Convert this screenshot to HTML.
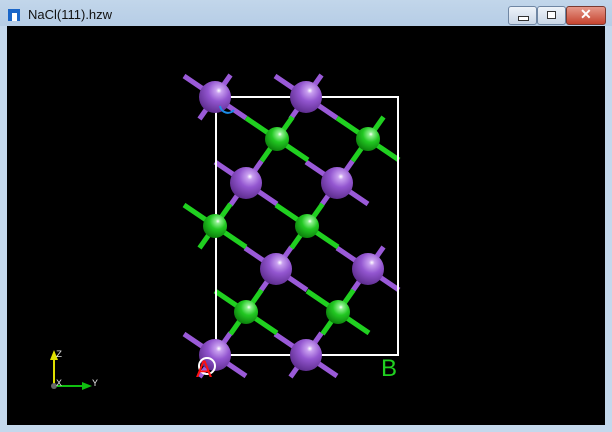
<!DOCTYPE html>
<html><head><meta charset="utf-8">
<style>
body{margin:0;width:612px;height:432px;overflow:hidden;background:#c4d8ec;font-family:"Liberation Sans",sans-serif;position:relative}
.tb{position:absolute;left:0;top:0;width:612px;height:26px;background:linear-gradient(#c2d6ea,#b6cde6)}
.title{position:absolute;left:28px;top:7px;font-size:13px;color:#111}
.ic{position:absolute;left:8px;top:9px;width:12px;height:12px;background:#1a66c8}
.ic:after{content:"";position:absolute;left:4px;top:4px;width:5px;height:8px;background:#fff}
.btn{position:absolute;top:6px;height:17px;border:1px solid #6f86a3;border-radius:3px;background:linear-gradient(#eef3f9,#c9d6e6)}
.cl{background:linear-gradient(#e6998a,#c5442f);border-color:#7a3a30}
.view{position:absolute;left:7px;top:26px;width:598px;height:399px;background:#000}
</style></head><body>
<div class="tb"></div>
<div class="ic"></div>
<div class="title">NaCl(111).hzw</div>
<div class="btn" style="left:508px;width:27px"><div style="position:absolute;left:9px;top:9px;width:9px;height:3px;background:#fff;border:1px solid #333"></div></div>
<div class="btn" style="left:537px;width:27px"><div style="position:absolute;left:9px;top:4px;width:7px;height:6px;border:1px solid #333;background:#fff"></div></div>
<div class="btn cl" style="left:566px;width:38px"><div style="position:absolute;left:13px;top:-1px;color:#fff;font-weight:bold;font-size:14px">✕</div></div>
<div class="view"></div>
<svg id="s" width="612" height="432" style="position:absolute;left:0;top:0">
<defs>
<radialGradient id="gp" cx="0.62" cy="0.3" r="0.75"><stop offset="0" stop-color="#fff"/><stop offset="0.12" stop-color="#c9a0f0"/><stop offset="0.45" stop-color="#9356d0"/><stop offset="1" stop-color="#5a2a8a"/></radialGradient>
<radialGradient id="gg" cx="0.62" cy="0.3" r="0.75"><stop offset="0" stop-color="#fff"/><stop offset="0.12" stop-color="#8ef08e"/><stop offset="0.45" stop-color="#22c822"/><stop offset="1" stop-color="#0a7a0a"/></radialGradient>
</defs>
<g id="bonds" stroke-width="5" stroke-linecap="butt"></g>
<rect x="216" y="97" width="182" height="258" fill="none" stroke="#fff" stroke-width="2"/>
<g id="atoms"></g>
<path d="M220 106 A8 8 0 0 0 234 110" fill="none" stroke="#1a8ce8" stroke-width="2"/>
<circle cx="207" cy="366" r="8" fill="none" stroke="#fff" stroke-width="2"/>
<text x="196" y="377" fill="#ff1010" font-size="24">A</text>
<text x="381" y="376" fill="#20d020" font-size="24">B</text>
<line x1="54" y1="386" x2="54" y2="360" stroke="#e0e000" stroke-width="2"/>
<polygon points="50,360 58,360 54,350" fill="#e0e000"/>
<line x1="54" y1="386" x2="82" y2="386" stroke="#10c010" stroke-width="2"/>
<polygon points="82,382 82,390 92,386" fill="#10c010"/>
<circle cx="54" cy="386" r="3" fill="#666"/>
<text x="56" y="357" fill="#ddd" font-size="10" font-family="Liberation Mono">Z</text>
<text x="56" y="386" fill="#ddd" font-size="10" font-family="Liberation Mono">X</text>
<text x="92" y="386" fill="#ddd" font-size="10" font-family="Liberation Mono">Y</text>
</svg>
<script>
var P=[[215,97],[306,97],[246,183],[337,183],[276,269],[368,269],[215,355],[306,355]];
var G=[[277,139],[368,139],[215,226],[307,226],[246,312],[338,312]];
var ns="http://www.w3.org/2000/svg",b=document.getElementById('bonds'),a=document.getElementById('atoms');
var D=[[31,21],[-31,-21],[-15.5,22],[15.5,-22]];
function add(L,c,r,g){L.forEach(function(p){D.forEach(function(d){var l=document.createElementNS(ns,'line');l.setAttribute('x1',p[0]);l.setAttribute('y1',p[1]);l.setAttribute('x2',p[0]+d[0]);l.setAttribute('y2',p[1]+d[1]);l.setAttribute('stroke',c);b.appendChild(l);});
var e=document.createElementNS(ns,'circle');e.setAttribute('cx',p[0]);e.setAttribute('cy',p[1]);e.setAttribute('r',r);e.setAttribute('fill','url(#'+g+')');a.appendChild(e);});}
add(P,'#9a5ad8',16,'gp');add(G,'#20d020',12,'gg');
</script>
</body></html>
